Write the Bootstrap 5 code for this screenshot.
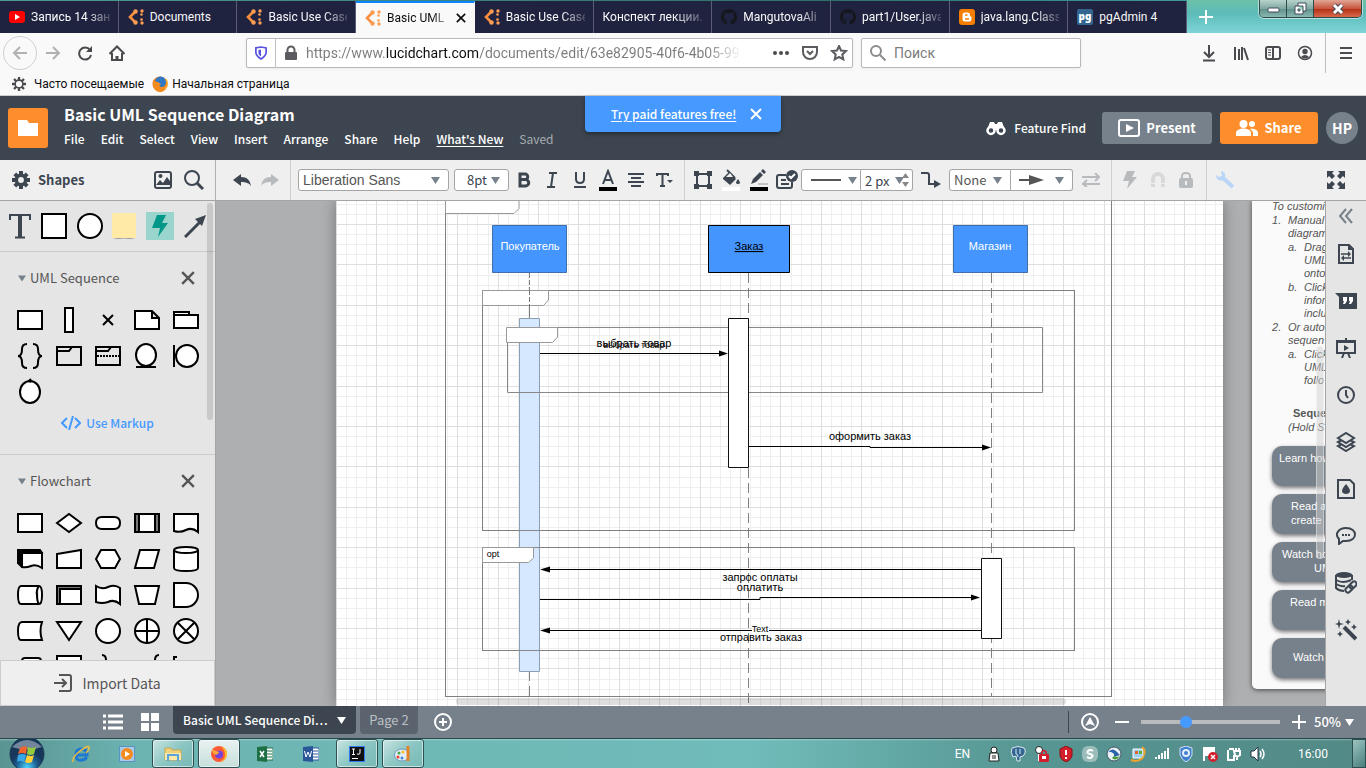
<!DOCTYPE html>
<html lang="en">
<head>
<meta charset="utf-8">
<meta name="viewport" content="width=device-width, initial-scale=1">
<title>Basic UML Sequence Diagram</title>
<link rel="stylesheet" href="https://cdn.jsdelivr.net/npm/bootstrap@5.3.0/dist/css/bootstrap.min.css">
<style>
  :root { --ink:#3d4650; --app:"Noto Sans CJK SC","Noto Sans",sans-serif; --sys:Roboto,"Noto Sans",sans-serif; }
  body { font-family:var(--app); font-size:13px; line-height:16px; color:var(--ink); background:#f9f9fa; }
  svg { display:block; flex-shrink:0; }
  button { background:none; border:0; padding:0; color:inherit; }
  .sys { font-family:var(--sys); font-size:12px; color:#0c0c0d; }
  .bar { flex-shrink:0; }

  /* browser tabs */
  .tabstrip { height:33px; padding-top:1px; background:linear-gradient(90deg,#4f9a94,#2f6f6c 60%,#3d9a98 87%,#8fd0b0 93%,#4db0ac); }
  .btab { flex:1 1 0; min-width:0; height:32px; padding:0 8px 0 9px; gap:6px; background:#202340; color:#f9f9fa; border-right:1px solid #5b5d75; text-decoration:none; }
  .btab.on { background:#f9f9fa; color:#0c0c0d; border-top:2px solid #0a84ff; border-right-color:#f9f9fa; }
  .btab span { flex:1; min-width:0; overflow:hidden; white-space:nowrap; -webkit-mask-image:linear-gradient(90deg,#000 70%,#0003); mask-image:linear-gradient(90deg,#000 70%,#0003); }
  .btab span.whole { -webkit-mask-image:none; mask-image:none; }
  .strip-end { width:179px; background:linear-gradient(#6cc0a8,#5cbcb8 40%,#7fd4d8); margin-top:-1px; height:33px; }
  .winbtns { height:18px; border:1px solid #30494b; border-top:0; border-radius:0 0 5px 5px; overflow:hidden; box-shadow:0 0 0 1px #ffffff80; }
  .winbtns button { width:27px; background:linear-gradient(#b8d4cc,#7fa8a0 50%,#5f8f88 51%,#88b8b0); border-right:1px solid #30494b; }
  .winbtns button.shut { width:47px; background:linear-gradient(#e0a595,#c8553d 50%,#b02f14 51%,#d8684a); border:0; }

  /* address row */
  .navrow { height:40px; }
  .navbtn { width:32px; height:32px; display:grid; place-items:center; }
  .navback { border:1px solid #cfcfd0; border-radius:50%; width:34px; height:34px; margin:0 0 0 3px; }
  .field { height:30px; background:#fff; border:1px solid #b9b9ba; border-radius:2px; box-shadow:0 1px 3px #0000000f; }
  .field input { border:0; outline:0; background:none; font:14px/20px var(--sys); min-width:0; padding:0; }
  .field input::placeholder { color:#7b7b7c; }
  .field input.addr { color:transparent; background:linear-gradient(90deg,#7b7b7c 0 79px,#0c0c0d 79px 173px,#7b7b7c 173px 400px,transparent 436px); -webkit-background-clip:text; background-clip:text; }
  .place { margin-left:113px; }
  .find { width:220px; margin-right:112px; }
  .bookmarks { height:23px; border-bottom:1px solid #cccdcf; }
  .bookmarks a { color:inherit; text-decoration:none; }

  /* editor header */
  .apphead { height:64px; background:var(--ink); color:#fff; }
  .apphead h1 { font-size:16px; line-height:20px; font-weight:700; margin:0; }
  .headings { padding-bottom:7px; }
  .apphead nav { padding-top:9px; }
  .apphead a { color:#fff; text-decoration:none; font-weight:500; font-size:12px; }
  .apphead nav span { color:#a5abb1; font-size:12px; }
  .apphead a.new { text-decoration:underline; text-underline-offset:2px; }
  .logo { width:40px; height:40px; background:#fd8e2b; border-radius:3px; display:grid; place-items:center; }
  .promo { top:0; height:36px; width:196px; background:#4599ff; border-radius:0 0 4px 4px; box-shadow:0 2px 4px #0006; gap:14px; padding-left:26px; }
  .apphead .promo a { text-decoration:underline; text-underline-offset:2px; }
  .hbtn { height:32px; border-radius:3px; font-weight:700; color:#fff; gap:6px; }
  .hbtn.present { width:110px; background:#77818b; }
  .hbtn.share { width:98px; background:#fd8e2b; }
  .avatar { width:32px; height:32px; border-radius:50%; background:#77818b; font-weight:700; font-size:14px; }

  /* toolbar */
  .tools { height:41px; background:#efefef; border-bottom:1px solid #a5a5a6; }
  .tools .lead-cell { width:216px; height:40px; border-right:1px solid #b0b0b0; padding:0 11px 0 12px; font-weight:700; }
  .vr2 { width:1px; height:40px; background:#cfcfcf; margin:0 4px 0 6px; }
  .tbtn { width:28px; height:28px; display:grid; place-items:center; }
  .first { margin-left:12px; }
  .off { opacity:.3; } .faint { opacity:.12; }
  .pick { height:22px; border:1px solid #a5a5a6; border-radius:3px; background:#fff no-repeat right 8px center url("data:image/svg+xml,%3Csvg xmlns='http://www.w3.org/2000/svg' width='9' height='7'%3E%3Cpath d='M0 0h9L4.500 7z' fill='%2377818b'/%3E%3C/svg%3E"); appearance:none; color:#555; font-family:var(--app); font-size:13px; line-height:18px; padding:0 0 0 4px; outline:0; }
  .pick.fam { width:151px; margin:0 5px 0 3px; font-family:"Liberation Sans",sans-serif; font-size:14px; }
  .pick.size { width:55px; padding-left:12px; margin-right:1px; color:var(--ink); }
  .pick.half { width:62px; } .pick.line { width:60px; background-position:right 3px center; } .pick.width { width:52px; color:var(--ink); }
  .pick.l { border-radius:3px 0 0 3px; } .pick.r { border-radius:0 3px 3px 0; border-left:0; }
  .over { pointer-events:none; }

  /* shape sidebar */
  .side { width:216px; background:#e5e5e5; border-right:1px solid #a5a5a6; color:#555; }
  .quick { height:51px; border-bottom:1px solid #ccc; padding:0 8px 0 9px; }
  .sec-head { height:50px; padding:2px 20px 0 18px; font-size:13px; }
  .shapes { display:grid; grid-template-columns:repeat(5,39px); grid-auto-rows:36px; padding-left:10px; }
  .shapes path,.shapes circle,.shapes ellipse { fill:#fff; stroke:#000; stroke-width:2; }
  .shapes .n { fill:none; } .shapes .k { fill:#000; } .shapes .g { fill:#777; }
  .markup { height:26px; color:#4599ff; font-weight:500; font-size:12px; text-decoration:none; gap:5px; }
  .split { height:1px; background:#ccc; margin:18px 0 0; }
  .import { height:46px; background:#efefef; border:1px solid #ccc; font-size:14px; color:#555; gap:10px; }
  .thumb { background:#00000020; border-radius:4px; }

  /* canvas */
  .canvas { background:#aeafb1; }
  .sheet { width:887px; background:#fff; margin-left:120px; margin-right:29px; box-shadow:0 0 14px #0005; }
  .sheet text { font:11px "Liberation Sans",sans-serif; text-anchor:middle; }
  .notes { width:260px; height:489px; background:#fafafa; border-radius:0 0 5px 5px; box-shadow:0 1px 5px #0009; font:italic 11px/13px "Liberation Sans",sans-serif; color:#555; padding:0 0 0 20px; margin-top:-1px; white-space:nowrap; }
  .notes ol { margin:0; padding-left:16px; list-style:none; counter-reset:step; }
  .notes li { margin-top:1px; counter-increment:step; }
  .notes li::before { content:counter(step) "."; display:inline-block; width:16px; margin-left:-16px; }
  .notes ol ol li::before { content:counter(step,lower-alpha) "."; }
  .notes b { font-style:normal; padding-left:21px; line-height:16px; margin-top:18px; display:block; }
  .ncard { height:40px; margin-bottom:8px; width:230px; border-radius:10px; background:#77818b; color:#fff; box-shadow:0 2px 4px #0008; font-style:normal; line-height:14px; display:block; padding-top:5px; text-decoration:none; }
  .hscroll { left:240px; right:259px; bottom:1px; height:7px; }
  .vscroll { right:1px; top:145px; width:8px; height:213px; background:#d0d0d080; border:1px solid #ffffff60; }
  .sidescroll { right:2px; top:2px; width:6px; height:217px; }

  /* right rail */
  .rail { width:41px; background:#e5e5e5; border-left:1px solid #a5a5a6; }
  .rail button { height:47px; width:40px; display:grid; place-items:center; }
  .rail button.fold { height:29px; }

  /* page bar */
  .pagebar { height:32px; background:#77818b; color:#fff; font-weight:500; }
  .views { margin-left:103px; margin-right:14px; gap:18px; }
  .ptab { height:28px; width:183px; border-radius:0 0 4px 4px; background:var(--ink); color:#fff; text-decoration:none; padding:0 10px; font-size:12px; white-space:nowrap; }
  .ptab.dim { width:58px; background:#5b646e; color:#bcc1c6; font-weight:400; margin-left:4px; padding:0; font-size:13px; }
  .rule { width:1px; height:22px; background:#3d4650; }
  .zoomer { appearance:none; width:139px; height:12px; margin:0 12px; background:linear-gradient(#b9babc,#b9babc) center/100% 4px no-repeat; }
  .zoomer::-webkit-slider-thumb { appearance:none; width:12px; height:12px; border-radius:50%; background:#4599ff; }

  /* taskbar */
  .taskbar { height:30px; border-top:1px solid #26484b; background:linear-gradient(#ffffff55,transparent 2px),linear-gradient(90deg,#5a9492,#6cb4b2 10%,#70bcba 55%,#579693 75%,#528986); }
  .task { width:42px; height:29px; margin-right:4px; display:grid; place-items:center; }
  .task.start { width:44px; margin:0 11px 0 5px; }
  .task.open { border:1px solid #2c5052; border-radius:3px; background:linear-gradient(135deg,#c8e4e1,#8cc6c3 50%,#76b9b6); box-shadow:inset 0 0 0 1px #ffffff90; }
  .task.front { background:linear-gradient(#e8f2f0,#c6dfdb); }
  .tray svg { margin-right:8px; }
  .peek { width:14px; height:29px; border:1px solid #2c5052; background:linear-gradient(135deg,#9cc4c0,#4a7f7c); }
</style>
</head>
<body class="vh-100 d-flex flex-column overflow-hidden">
<svg width="0" height="0" class="position-absolute">
  <symbol id="lucid" viewBox="0 0 16 16"><path d="M6.500 3.500 2 8l4.500 4.500" fill="none" stroke="#f98f3f" stroke-width="2.600"/><g fill="#ff9d52"><circle cx="7.500" cy="2.500" r="2.200"/><circle cx="7.500" cy="13.500" r="2.200"/><circle cx="14" cy="2" r="1.700"/><circle cx="14" cy="14" r="1.700"/><circle cx="13.500" cy="5.500" r="1.300"/><circle cx="13.500" cy="10.500" r="1.300"/></g></symbol>
  <symbol id="cat" viewBox="0 0 16 16"><path fill="#15171c" d="M8 0C3.580 0 0 3.580 0 8c0 3.540 2.290 6.530 5.470 7.590.4.070.55-.17.55-.38 0-.19-.01-.82-.01-1.490-2.010.37-2.530-.49-2.690-.94-.09-.23-.48-.94-.82-1.130-.28-.15-.68-.52-.01-.53.63-.01 1.080.58 1.230.82.72 1.210 1.870.87 2.330.66.07-.52.28-.87.51-1.070-1.780-.2-3.640-.89-3.640-3.950 0-.87.31-1.590.82-2.150-.08-.2-.36-1.020.08-2.120 0 0 .67-.21 2.200.82a7.600 7.600 0 0 1 4 0c1.530-1.040 2.200-.82 2.200-.82.44 1.100.16 1.920.08 2.120.51.56.82 1.270.82 2.150 0 3.070-1.870 3.750-3.650 3.950.29.25.54.73.54 1.480 0 1.070-.01 1.930-.01 2.200 0 .21.15.46.55.38A8 8 0 0 0 8 0"/></symbol>
  <symbol id="cross" viewBox="0 0 12 12"><path d="M1 1l10 10M11 1 1 11" stroke="currentColor" stroke-width="2" fill="none"/></symbol>
  <symbol id="gear" viewBox="0 0 18 18"><path fill="none" stroke="currentColor" stroke-width="4" d="M9 0v3M9 15v3M0 9h3M15 9h3M2.800 2.800l2 2M13.200 13.200l2 2M15.200 2.800l-2 2M4.800 13.200l-2 2"/><circle cx="9" cy="9" r="4.700" fill="none" stroke="currentColor" stroke-width="3.600"/></symbol>
  <symbol id="down" viewBox="0 0 9 7"><path d="M0 0h9L4.500 7z" fill="currentColor"/></symbol>
</svg>

<nav class="tabstrip bar sys d-flex" aria-label="Browser tabs">
  <a href="#" class="btab d-flex align-items-center"><svg width="16" height="16" viewBox="0 0 16 16"><rect y="2" width="16" height="12" rx="3" fill="#f00"/><path d="M6 5l5 3-5 3z" fill="#fff"/></svg><span>Запись 14 зан</span></a>
  <a href="#" class="btab d-flex align-items-center"><svg width="16" height="16"><use href="#lucid"/></svg><span class="whole">Documents</span></a>
  <a href="#" class="btab d-flex align-items-center"><svg width="16" height="16"><use href="#lucid"/></svg><span>Basic Use Case</span></a>
  <a href="#" class="btab on d-flex align-items-center"><svg width="16" height="16"><use href="#lucid"/></svg><span>Basic UML</span><svg width="10" height="10"><use href="#cross" width="10" height="10"/></svg></a>
  <a href="#" class="btab d-flex align-items-center"><svg width="16" height="16"><use href="#lucid"/></svg><span>Basic Use Case</span></a>
  <a href="#" class="btab d-flex align-items-center"><span>Конспект лекции.</span></a>
  <a href="#" class="btab d-flex align-items-center"><svg width="16" height="16"><use href="#cat"/></svg><span>MangutovaAli</span></a>
  <a href="#" class="btab d-flex align-items-center"><svg width="16" height="16"><use href="#cat"/></svg><span>part1/User.java</span></a>
  <a href="#" class="btab d-flex align-items-center"><svg width="16" height="16" viewBox="0 0 16 16"><rect width="16" height="16" rx="3" fill="#f57d00"/><path d="M6 3.500h2.500A2.500 2.500 0 0 1 11 6v1l1.500.8V10A2.500 2.500 0 0 1 10 12.500H6A2.500 2.500 0 0 1 3.500 10V6A2.500 2.500 0 0 1 6 3.500z" fill="#fff"/><path d="M6 6h2.500M6 10h4" stroke="#f57d00" stroke-width="1.500"/></svg><span>java.lang.Class</span></a>
  <a href="#" class="btab d-flex align-items-center"><svg width="16" height="16" viewBox="0 0 16 16"><rect width="16" height="16" rx="2" fill="#326690"/><text x="8" y="11" text-anchor="middle" fill="#fff" font-family="Noto Sans" font-weight="900" font-size="10">pg</text></svg><span class="whole">pgAdmin 4</span></a>
  <div class="strip-end d-flex justify-content-between">
    <button class="ms-2 ps-1" aria-label="New tab"><svg width="14" height="14"><path d="M7 0v14M0 7h14" stroke="#fff" stroke-width="2"/></svg></button>
    <div class="winbtns d-flex me-1">
      <button aria-label="Minimize"><svg class="mx-auto" width="14" height="12"><rect x="2" y="5" width="11" height="4" rx="1" fill="#fff" stroke="#444b5c"/></svg></button>
      <button aria-label="Restore"><svg class="mx-auto" width="14" height="14"><path d="M5 1h8v8h-3v3H2V4h3z" fill="#fff" stroke="#444b5c"/><path d="M5 4h5v5M5 7h2v2H5z" fill="#8db" stroke="#444b5c"/></svg></button>
      <button class="shut" aria-label="Close"><svg class="mx-auto" width="14" height="14"><path d="M3 3l8 8M11 3l-8 8" stroke="#444b5c" stroke-width="5"/><path d="M3 3l8 8M11 3l-8 8" stroke="#fff" stroke-width="3"/></svg></button>
    </div>
  </div>
</nav>

<div class="navrow bar sys d-flex align-items-center">
  <button class="navbtn navback" aria-label="Back"><svg width="16" height="16" fill="none" stroke="#b1b1b3" stroke-width="2"><path d="M15 8H2M8 2 2 8l6 6"/></svg></button>
  <button class="navbtn" aria-label="Forward"><svg width="16" height="16" fill="none" stroke="#b1b1b3" stroke-width="2"><path d="M1 8h13M8 2l6 6-6 6"/></svg></button>
  <button class="navbtn" aria-label="Reload"><svg width="16" height="16" fill="none" stroke="#4a4a4f" stroke-width="2"><path d="M13 5a6 6 0 1 0 1 5"/><path d="M15 1v6H9z" fill="#4a4a4f" stroke="none"/></svg></button>
  <button class="navbtn" aria-label="Home"><svg width="16" height="16" fill="none" stroke="#4a4a4f" stroke-width="2"><path d="M.5 9 8 1.500 15.500 9M3 8v7h10V8"/><path d="M8 15v-4" stroke-width="3"/></svg></button>
  <div class="field place d-flex align-items-center flex-grow-1 ps-2 pe-1">
    <svg width="12" height="16" viewBox="0 0 14 16" fill="none"><path d="M1 2 7 1l6 1v5c0 4-3 6-6 8-3-2-6-4-6-8z" stroke="#5a55e0" stroke-width="2"/><path d="M7 4v8c-2-1-3-3-3-5V4.500z" fill="#5a55e0"/></svg>
    <div class="vr mx-2"></div>
    <svg class="me-2" width="14" height="16"><rect x="1" y="7" width="12" height="8" rx="1" fill="#5c5c60"/><path d="M3.500 8V5a3.500 3.500 0 0 1 7 0v3" fill="none" stroke="#5c5c60" stroke-width="2"/></svg>
    <input class="addr flex-grow-1" aria-label="Address" value="https://www.lucidchart.com/documents/edit/63e82905-40f6-4b05-99">
    <button aria-label="Page actions"><svg width="18" height="16" fill="#4a4a4f"><circle cx="3" cy="8" r="2"/><circle cx="9" cy="8" r="2"/><circle cx="15" cy="8" r="2"/></svg></button>
    <button class="mx-2 px-1" aria-label="Save to Pocket"><svg width="16" height="16" fill="none" stroke="#5c5c60" stroke-width="2"><path d="M1 2h14v5a7 7 0 0 1-14 0z"/><path d="M5 6l3 3 3-3"/></svg></button>
    <button aria-label="Bookmark this page"><svg width="18" height="16" fill="none" stroke="#5c5c60" stroke-width="2"><path d="M9 1l2 4.500 5 .5-3.700 3.400 1 5L9 12l-4.300 2.400 1-5L2 6l5-.5z"/></svg></button>
  </div>
  <div class="field find d-flex align-items-center ms-2 px-2">
    <svg width="16" height="16" fill="none" stroke="#8c8c8e" stroke-width="2"><circle cx="6" cy="6" r="5"/><path d="M10 10l5.500 5.500"/></svg>
    <input class="ms-1 ps-1 w-75" aria-label="Search" placeholder="Поиск">
  </div>
  <button class="navbtn" aria-label="Downloads"><svg width="14" height="18" fill="none" stroke="#4a4a4f" stroke-width="2"><path d="M7 1v12M2 8l5 5 5-5M1 16.500h12"/></svg></button>
  <button class="navbtn" aria-label="Library"><svg width="16" height="16" fill="none" stroke="#4a4a4f" stroke-width="2"><path d="M2 2v13M6 4v11M9 2v13M11 3l4 12"/></svg></button>
  <button class="navbtn" aria-label="Sidebars"><svg width="16" height="14" fill="none" stroke="#4a4a4f" stroke-width="2"><rect x="1" y="1" width="14" height="12" rx="2"/><path d="M8 1v12"/><path d="M3 4h3M3 6.500h3M3 9h3" stroke-width="1"/></svg></button>
  <button class="navbtn" aria-label="Account"><svg width="16" height="16"><circle cx="8" cy="8" r="6.500" fill="none" stroke="#4a4a4f" stroke-width="1.500"/><circle cx="8" cy="6.500" r="2.700" fill="#4a4a4f"/><path d="M4 12q4-4 8 0-4 3-8 0z" fill="#4a4a4f"/></svg></button>
  <div class="vr ms-1"></div>
  <button class="navbtn mx-1" aria-label="Menu"><svg width="12" height="12" stroke="#4a4a4f" stroke-width="2"><path d="M0 1h12M0 6h12M0 11h12"/></svg></button>
</div>

<div class="bookmarks bar sys d-flex align-items-center ps-2">
  <svg class="mx-1" width="14" height="14" viewBox="0 0 18 18"><circle cx="9" cy="9" r="5" fill="none" stroke="#4a4a4f" stroke-width="2"/><path fill="none" stroke="#4a4a4f" stroke-width="3" d="M9 0v4M9 14v4M0 9h4M14 9h4M2.600 2.600l3 3M12.400 12.400l3 3M15.400 2.600l-3 3M5.600 12.400l-3 3"/></svg>
  <a href="#" class="ms-1">Часто посещаемые</a>
  <svg class="ms-2 me-1" width="16" height="16"><circle cx="8" cy="8" r="7.500" fill="#f07a14"/><circle cx="8.500" cy="6" r="5.500" fill="#2f78c4"/><path d="M1 4c2 1 3 2 5 2l3 2c-2 1-2 3 1 3 2 0 3-1 5-1-1 4-4 6-7 6C2 16 0 9 1 4" fill="#f58a1f"/><path d="M14 3q3 6-1 10" fill="none" stroke="#fbb034" stroke-width="1.500"/></svg>
  <a href="#">Начальная страница</a>
</div>

<header class="apphead bar position-relative d-flex align-items-center px-2">
  <a href="#" class="logo" aria-label="Documents"><svg width="20" height="16" fill="#fff"><path d="M0 0h9l2 3h9v13H0z"/></svg></a>
  <div class="headings ms-3 flex-grow-1">
    <h1>Basic UML Sequence Diagram</h1>
    <nav class="d-flex gap-3 lh-1" aria-label="Document menu">
      <a href="#">File</a><a href="#">Edit</a><a href="#">Select</a><a href="#">View</a><a href="#">Insert</a><a href="#">Arrange</a><a href="#">Share</a><a href="#">Help</a><a href="#" class="new">What's New</a><span>Saved</span>
    </nav>
  </div>
  <div class="promo position-absolute start-50 translate-middle-x d-flex align-items-center">
    <a href="#">Try paid features free!</a>
    <button aria-label="Dismiss"><svg width="12" height="12"><use href="#cross"/></svg></button>
  </div>
  <a href="#" class="d-flex align-items-center me-3"><svg class="me-2" width="20" height="16"><path d="M4 2h4l1 2h2l1-2h4l3 8H1z" fill="#fff"/><g fill="#3d4650" stroke="#fff" stroke-width="2.500"><circle cx="5" cy="10.500" r="3.500"/><circle cx="15" cy="10.500" r="3.500"/></g></svg>Feature Find</a>
  <button class="hbtn present me-2 d-flex align-items-center justify-content-center"><svg width="22" height="18"><rect x="1" y="1" width="20" height="16" rx="2" fill="none" stroke="#fff" stroke-width="2"/><path d="M8 5l8 4-8 4z" fill="#fff"/></svg>Present</button>
  <button class="hbtn share me-2 d-flex align-items-center justify-content-center"><svg width="22" height="16" fill="#fff"><circle cx="7.500" cy="4" r="4"/><circle cx="16" cy="4" r="3"/><path d="M0 16v-3c0-6 15-6 15 0v3zM14 9c4-1 8 1 8 4v3h-5v-3q0-2-3-4"/></svg>Share</button>
  <button class="avatar">HP</button>
</header>

<div class="tools bar d-flex align-items-center">
  <div class="lead-cell d-flex align-items-center"><svg class="me-2" width="18" height="18"><use href="#gear"/></svg>Shapes
    <button class="ms-auto" aria-label="Insert image"><svg width="18" height="18"><rect x="1" y="1" width="16" height="16" rx="2" fill="none" stroke="#3d4650" stroke-width="2"/><path d="M2 14l4-5 3 3 4-6 3 4v4z" fill="#3d4650"/><circle cx="6.500" cy="5" r="2" fill="#3d4650"/></svg></button>
    <button class="ms-2 ps-1" aria-label="Search shapes"><svg width="20" height="20" fill="none" stroke="#3d4650"><circle cx="8" cy="8" r="7" stroke-width="2"/><path d="M13 13l6 6" stroke-width="3"/></svg></button>
  </div>
  <button class="tbtn first" aria-label="Undo"><svg width="18" height="13" fill="#3d4650"><path d="M0 6 8 0v3c6 0 9 3 10 9-2-3-5-4-10-4v4z"/></svg></button>
  <button class="tbtn off" aria-label="Redo"><svg width="18" height="13" fill="#3d4650"><path d="M18 6 10 0v3C4 3 1 6 0 12c2-3 5-4 10-4v4z"/></svg></button>
  <div class="vr2"></div>
  <select class="pick fam" aria-label="Font"><option>Liberation Sans</option></select>
  <select class="pick size" aria-label="Font size"><option>8pt</option></select>
  <button class="tbtn" aria-label="Bold"><svg width="14" height="18"><path d="M3 3h5a2.500 2.500 0 0 1 0 5.500H3zM3 8.500h5.500a3 3 0 0 1 0 6.500H3z" fill="none" stroke="#3d4650" stroke-width="3"/></svg></button>
  <button class="tbtn" aria-label="Italic"><svg width="12" height="16" stroke="#3d4650" stroke-width="2"><path d="M3 1h8M1 15h8M7 1 5 15"/></svg></button>
  <button class="tbtn" aria-label="Underline"><svg width="12" height="18" fill="none" stroke="#3d4650" stroke-width="2"><path d="M2 1v7q0 4 4 4t4-4V1M0 16h12"/></svg></button>
  <button class="tbtn" aria-label="Text colour"><svg width="18" height="22"><path d="M4 15 9 2l5 13M6 11h6" fill="none" stroke="#3d4650" stroke-width="2"/><path d="M0 18h18v4H0z"/></svg></button>
  <button class="tbtn" aria-label="Alignment"><svg width="16" height="14" stroke="#3d4650" stroke-width="2"><path d="M0 1h16M3 5h10M0 9h16M3 13h10"/></svg></button>
  <button class="tbtn" aria-label="Text options"><svg width="17" height="14"><path d="M1 3V1h11v2M6.500 1v12M4 13h5" fill="none" stroke="#3d4650" stroke-width="2"/><path d="M11 7h6l-3 3z" fill="#3d4650"/></svg></button>
  <div class="vr2"></div>
  <button class="tbtn" aria-label="Shape options"><svg width="18" height="18"><path d="M3 3h12v12H3z" fill="none" stroke="#3d4650" stroke-width="2"/><path d="M0 0h5v5H0zM13 0h5v5h-5zM0 13h5v5H0zM13 13h5v5h-5z" fill="#3d4650"/></svg></button>
  <button class="tbtn" aria-label="Fill colour"><svg width="18" height="22"><path d="M1 9 7 3l7 7-6 6-7-6z" fill="#3d4650"/><path d="M5 1l8 8" stroke="#3d4650" stroke-width="2"/><path d="M8 4l3 4H4z" fill="#efefef"/><path d="M16 10q4 5 0 5t0-5" fill="#3d4650"/><path d="M0 18h18v4H0z" fill="#fff"/></svg></button>
  <button class="tbtn" aria-label="Line colour"><svg width="18" height="22"><path d="M1 15l2-5 7-7 3 3-7 7zM11 2l2-2 3 3-2 2z" fill="#3d4650"/><path d="M8 15h10" stroke="#999"/><path d="M0 18h18v4H0z"/></svg></button>
  <button class="tbtn" aria-label="Conditional formatting"><svg width="22" height="20"><path d="M10 5H3q-2 0-2 2v9q0 2 2 2h11q2 0 2-2v-4M5 10h5M5 14h8" fill="none" stroke="#3d4650" stroke-width="2"/><circle cx="16" cy="6" r="6" fill="#3d4650"/><path d="M13 6l2 2 4-4" fill="none" stroke="#fff" stroke-width="2"/></svg></button>
  <div class="position-relative">
    <select class="pick l line" aria-label="Line style"><option></option></select>
    <svg class="over position-absolute top-50 start-0 translate-middle-y ms-2" width="34" height="2"><path d="M2 1h30" stroke="#555" stroke-width="2"/></svg>
  </div>
  <div class="position-relative">
    <input class="pick r width bg-white" aria-label="Line width" value="2 px">
    <svg class="over position-absolute top-50 end-0 translate-middle-y me-1" width="7" height="14" fill="#888"><path d="M0 5h7L3.500 0zM0 9h7l-3.500 5z"/></svg>
  </div>
  <button class="tbtn ms-1" aria-label="Connector shape"><svg width="20" height="16"><path d="M0 1h6q2 0 2 2v9h6" fill="none" stroke="#3d4650" stroke-width="2"/><path d="M13 8l7 4-7 4z" fill="#3d4650"/></svg></button>
  <select class="pick l half ms-1" aria-label="Line start"><option>None</option></select>
  <div class="position-relative me-1">
    <select class="pick r half" aria-label="Line end"><option></option></select>
    <svg class="over position-absolute top-50 start-0 translate-middle-y ms-2" width="26" height="10"><path d="M0 5h12" stroke="#555" stroke-width="2"/><path d="M10 0l15 5-15 5z" fill="#555"/></svg>
  </div>
  <button class="tbtn off" aria-label="Swap ends"><svg width="18" height="14" fill="none" stroke="#3d4650" stroke-width="2"><path d="M0 4h17M13 0l4 4-4 4M18 11H1M5 7l-4 4 4 3"/></svg></button>
  <div class="vr2"></div>
  <button class="tbtn off" aria-label="Actions"><svg width="14" height="18" fill="#3d4650"><path d="M4 0h8L9 6h5L4 18l2-8H0z"/></svg></button>
  <button class="tbtn faint" aria-label="Magnetize"><svg width="14" height="16" fill="none" stroke="#3d4650" stroke-width="4"><path d="M2 11V7a5 5 0 0 1 10 0v4M2 12v3M12 12v3"/></svg></button>
  <button class="tbtn off" aria-label="Lock"><svg width="14" height="16"><rect y="6" width="14" height="10" rx="2" fill="#3d4650"/><path d="M3 7V4q0-3 4-3t4 3v3" fill="none" stroke="#3d4650" stroke-width="2"/><path d="M7 9v4" stroke="#fff" stroke-width="2"/></svg></button>
  <div class="vr2"></div>
  <button class="tbtn" aria-label="Manage"><svg width="18" height="18"><path d="M7 7l10 9" stroke="#b9d5f7" stroke-width="4"/><path d="M5 0q5 1 4 6t-6 3Q0 8 0 4l3 2 3-1z" fill="#b9d5f7"/></svg></button>
  <button class="tbtn ms-auto me-3" aria-label="Full screen"><svg width="18" height="18" fill="#3d4650"><path d="M0 0h7L5 2l3 3-3 3-3-3-2 2zM18 0v7l-2-2-3 3-3-3 3-3-2-2zM0 18v-7l2 2 3-3 3 3-3 3 2 2zM18 18h-7l2-2-3-3 3-3 3 3 2-2z"/></svg></button>
</div>

<main class="flex-grow-1 d-flex overflow-hidden">
  <aside class="side flex-shrink-0 d-flex flex-column position-relative">
    <div class="quick flex-shrink-0 d-flex align-items-center justify-content-between">
      <button aria-label="Text"><svg width="22" height="26"><path d="M1 7V2h20v5M11 2v22M6 24.500h10" fill="none" stroke="#3d4650" stroke-width="2"/><path d="M11 2v22" stroke="#3d4650" stroke-width="4"/></svg></button>
      <button aria-label="Block"><svg width="26" height="26"><path d="M1 1h24v24H1z" fill="#fff" stroke="#000" stroke-width="2"/></svg></button>
      <button aria-label="Circle"><svg width="26" height="26"><circle cx="13" cy="13" r="12" fill="#fff" stroke="#000" stroke-width="2"/></svg></button>
      <button aria-label="Note"><svg width="24" height="26"><path d="M2 25q10 2 20 0" stroke="#999" fill="none"/><path d="M0 0h24v25H0z" fill="#ffeaa7"/></svg></button>
      <button aria-label="Hotspot"><svg width="28" height="28"><path d="M0 0h28v28H0z" fill="#9ad5cd"/><path d="M11 3h9l-4 8h6L12 25l2-9H6z" fill="#009688"/></svg></button>
      <button aria-label="Line"><svg width="23" height="24"><path d="M1 23 17 7" stroke="#3d4650" stroke-width="3"/><path d="M22 1l-4 11-7-7z" fill="#3d4650"/></svg></button>
    </div>
    <div class="flex-grow-1 overflow-hidden">
      <div class="sec-head d-flex align-items-center"><svg class="me-1" width="8" height="7" color="#77818b"><use href="#down"/></svg>UML Sequence<button class="ms-auto" aria-label="Close UML Sequence"><svg width="14" height="14"><use href="#cross"/></svg></button></div>
      <div class="shapes" data-set="uml"></div>
      <a href="#" class="markup d-flex align-items-center justify-content-center"><svg width="20" height="14" fill="none" stroke="#4599ff" stroke-width="2"><path d="M6 2 1 7l5 5M14 2l5 5-5 5M12 0 8 14"/></svg>Use Markup</a>
      <div class="split"></div>
      <div class="sec-head d-flex align-items-center"><svg class="me-1" width="8" height="7" color="#77818b"><use href="#down"/></svg>Flowchart<button class="ms-auto" aria-label="Close Flowchart"><svg width="14" height="14"><use href="#cross"/></svg></button></div>
      <div class="shapes" data-set="flow"></div>
    </div>
    <button class="import flex-shrink-0 w-100 d-flex align-items-center justify-content-center"><svg width="18" height="18" fill="none" stroke="#555" stroke-width="2"><path d="M5 1h10q2 0 2 2v12q0 2-2 2H5M0 9h12M8 5l4 4-4 4"/></svg>Import Data</button>
    <div class="thumb sidescroll position-absolute"></div>
  </aside>

  <section class="canvas flex-grow-1 overflow-hidden position-relative d-flex" aria-label="Canvas">
    <div class="sheet flex-shrink-0">
      <svg width="887" height="505" viewBox="336 201 887 505">
        <path id="minor" stroke="#efefef" fill="none"/><path id="major" stroke="#dedede" fill="none"/>
        <g fill="none" stroke="#808080" shape-rendering="crispEdges">
          <path d="M445.500 190V696.500H1111.500V190"/><path d="M482.500 290.500H1074.500V530.500H482.500zM482.500 547.500H1074.500V650.500H482.500z"/>
          <path d="M529.500 273v45" stroke-dasharray="5 2"/><path d="M529.500 671v26" stroke-dasharray="10 5"/>
          <path d="M748.500 273V706M991.500 273V697" stroke-dasharray="10 5"/>
        </g>
        <g fill="#fff" stroke="#999"><path d="M445.500 190V213.500H514l5-5V190M482.500 290.500H548.500V300l-5 5.500H482.500z"/></g>
        <path d="M529.500 290v28" stroke="#777" stroke-dasharray="5 2"/>
        <path d="M519.500 318.500h20v353h-20z" fill="#d6e8ff" stroke="#8ba0b5"/>
        <path d="M507.500 327.500h535v65h-535zM519 530.500h21M519 547.500h21M519 650.500h21" fill="none" stroke="#888"/>
        <g fill="#fff" stroke="#999"><path d="M506.500 327.500H557.500V337l-5 5.500H506.500zM482.500 547.500H533.500V558l-5 4.500H482.500z"/></g>
        <g fill="#fff" stroke="#111"><path d="M728.500 318.500h20v149h-20zM981.500 558.500h20v80h-20z"/></g>
        <g fill="#4595ff" stroke="#3f6ea8"><path d="M492.500 225.500h74v47h-74zM953.500 225.500h74v47h-74z"/><path d="M708.500 225.500h81v47h-81z" stroke="#000"/></g>
        <g fill="none" stroke="#000"><path d="M540 353.500H722M749 446.500H870v1H985M981 569.500H546M540 599.500H760v-2H975M981 630.500H546"/></g>
        <path d="M728 353.500l-9-3v6zM991 447.500l-9-3v6zM540 569.500l10-3v6zM980 597.500l-9-3v6zM540 630.500l10-3v6z"/>
        <text x="530" y="250" style="fill:#fff">Покупатель</text>
        <text x="749" y="250" text-decoration="underline">Заказ</text>
        <text x="990" y="250" style="fill:#fff">Магазин</text>
        <text x="634" y="348" style="font-size:9px">выбрать товар</text>
        <text x="634" y="347">выбрать товар</text>
        <text x="870" y="440">оформить заказ</text>
        <text x="493" y="557" style="font-size:9px">opt</text>
        <text x="760" y="581">запрос оплаты</text>
        <text x="760" y="591">оплатить</text>
        <path d="M752 625h17v10h-17z" fill="#fff"/>
        <text x="760" y="632" style="font-size:9px">Text</text>
        <text x="761" y="641">отправить заказ</text>
      </svg>
    </div>
    <div class="notes flex-shrink-0">
      To customi
      <ol><li>Manual<br>diagram<ol><li>Drag<br>UML<br>onto</li><li>Click<br>infor<br>inclu</li></ol></li><li>Or auto<br>sequen<ol><li>Click<br>UML<br>follo</li></ol></li></ol>
      <b>Seque</b><div class="ps-3 mb-2 pb-1">(Hold S</div>
      <a href="#" class="ncard" style="padding-left:7px">Learn how</a>
      <a href="#" class="ncard" style="padding-left:19px">Read a<br>create</a>
      <a href="#" class="ncard" style="padding-left:10px">Watch ho<br><span class="ms-4 ps-2">UM</span></a>
      <a href="#" class="ncard" style="padding-left:18px">Read m</a>
      <a href="#" class="ncard pt-2" style="padding-left:21px"><span class="d-block pt-1">Watch</span></a>
    </div>
    <div class="thumb hscroll position-absolute"></div>
    <div class="vscroll position-absolute rounded"></div>
  </section>

  <aside class="rail flex-shrink-0" aria-label="Panels">
    <button class="fold" aria-label="Collapse"><svg width="16" height="16" fill="none" stroke="#77818b" stroke-width="2"><path d="M8 1 2 8l6 7M14 1 8 8l6 7"/></svg></button>
    <button aria-label="Page settings"><svg width="16" height="20" fill="none" stroke="#3d4650" stroke-width="2"><path d="M1 1h10l4 4v14H1z"/><path d="M3 10h9M13 14H4" stroke-width="1.500"/><path d="M10 7l3 3-3 3zM6 11l-3 3 3 3zM10 1v5h5z" fill="#3d4650" stroke="none"/></svg></button>
    <button aria-label="Comments"><svg width="22" height="16"><path d="M0 0h22v16H4V4z" fill="#3d4650"/><path d="M8 4h4v4l-2 3H8l1-3H8zM14 4h4v4l-2 3h-2l1-3h-1z" fill="#fff"/></svg></button>
    <button aria-label="Presentation"><svg width="20" height="20"><path d="M1 4h18v11H1z" fill="none" stroke="#3d4650" stroke-width="2"/><path d="M0 2h20v3H0zM9 0h2v3H9zM8 7l5 3-5 3z" fill="#3d4650"/><path d="M8 15l-2 5M12 15l2 5" stroke="#3d4650" stroke-width="2"/></svg></button>
    <button aria-label="History"><svg width="18" height="18" fill="none" stroke="#3d4650" stroke-width="2"><circle cx="9" cy="9" r="8"/><path d="M9 4v5l2 3"/></svg></button>
    <button aria-label="Layers"><svg width="20" height="20" fill="#e5e5e5" stroke="#3d4650" stroke-width="2"><path d="M2 14l8-4 8 4-8 5z"/><path d="M2 10l8-4 8 4-8 5z"/><path d="M2 6l8-5 8 5-8 5z"/></svg></button>
    <button aria-label="Themes"><svg width="18" height="20"><path d="M1 1h12l4 4v14H1z" fill="none" stroke="#3d4650" stroke-width="2"/><path d="M9 5q8 9 0 10-8-1 0-10" fill="#3d4650"/></svg></button>
    <button aria-label="Chat"><svg width="20" height="18"><path d="M10 1c12 0 12 13 0 13H7l-4 3v-5C-2 7 3 1 10 1z" fill="none" stroke="#3d4650" stroke-width="2"/><path d="M6 7h2v2H6zM9 7h2v2H9zM12 7h2v2h-2z" fill="#3d4650"/></svg></button>
    <button aria-label="Data"><svg width="22" height="22"><path d="M1 3v13q3 3 8 3M1 8q7 4 15 0M1 12q5 3 9 2M17 3v5" fill="none" stroke="#3d4650" stroke-width="2"/><ellipse cx="9" cy="3" rx="8.500" ry="3" fill="#3d4650"/><rect x="-4" y="-2.500" width="8" height="5" rx="2.500" transform="translate(18 13) rotate(-45)" fill="none" stroke="#3d4650" stroke-width="2"/><rect x="-4" y="-2.500" width="8" height="5" rx="2.500" transform="translate(14 17) rotate(-45)" fill="none" stroke="#3d4650" stroke-width="2"/></svg></button>
    <button aria-label="Magic"><svg width="22" height="22" fill="#3d4650"><path d="M9 8l12 12" stroke="#3d4650" stroke-width="4"/><path d="M4 0l1 4 4 1-4 1-1 4-1-4-3-1 3-1zM13 0l1 2 2 1-2 1-1 2-1-2-2-1 2-1zM19 5l1 2 2 1-2 1-1 2-1-2-2-1 2-1zM5 12l1 2 2 1-2 1-1 2-1-2-2-1 2-1z"/></svg></button>
  </aside>
</main>

<footer class="pagebar bar d-flex align-items-start">
  <div class="views d-flex align-self-center">
    <button aria-label="Page list"><svg width="20" height="16" stroke="#fff" stroke-width="3"><path d="M0 2h3M5 2h15M0 8h3M5 8h15M0 14h3M5 14h15"/></svg></button>
    <button aria-label="Page grid"><svg width="18" height="18" fill="#fff"><path d="M0 0h8v8H0zM10 0h8v8h-8zM0 10h8v8H0zM10 10h8v8h-8z"/></svg></button>
  </div>
  <a href="#" class="ptab d-flex align-items-center justify-content-between">Basic UML Sequence Di…<svg width="9" height="7"><use href="#down"/></svg></a>
  <a href="#" class="ptab dim d-flex align-items-center justify-content-center">Page 2</a>
  <button class="align-self-center ms-3 me-auto" aria-label="Add page"><svg width="18" height="18" fill="none" stroke="#fff" stroke-width="2"><circle cx="9" cy="9" r="8"/><path d="M9 5v8M5 9h8"/></svg></button>
  <div class="d-flex align-items-center align-self-center pe-2">
    <div class="rule me-2"></div>
    <button class="ms-1" aria-label="Centre page"><svg width="18" height="18"><circle cx="9" cy="9" r="8" fill="none" stroke="#fff" stroke-width="2"/><path d="M9 4l5 9-5-2-5 2z" fill="#fff"/></svg></button>
    <button class="ms-3" aria-label="Zoom out"><svg width="14" height="2"><path d="M0 1h14" stroke="#fff" stroke-width="2"/></svg></button>
    <input class="zoomer px-0" type="range" min="0" max="100" value="31" aria-label="Zoom">
    <button aria-label="Zoom in"><svg width="14" height="14"><path d="M0 7h14M7 0v14" stroke="#fff" stroke-width="2"/></svg></button>
    <button class="ms-2 me-1 d-flex align-items-center fw-medium">50%<svg class="ms-1" width="9" height="7"><use href="#down"/></svg></button>
  </div>
</footer>

<div class="taskbar bar sys d-flex align-items-center text-white">
  <button class="task start" aria-label="Start"><svg width="36" height="30" viewBox="0 0 36 30"><defs><radialGradient id="orb" cy=".9"><stop stop-color="#4fd8ff"/><stop offset=".6" stop-color="#1c5f92"/><stop offset="1" stop-color="#16365a"/></radialGradient></defs><circle cx="18" cy="15" r="17" fill="url(#orb)" stroke="#1c3c56"/><path d="M3 8Q18-6 33 8q-15 5-30 0" fill="#fff6"/><path d="M11 9q4-3 7-1l-1 7q-4-2-8 0z" fill="#f0642c"/><path d="M19 8q4 2 8 0l-2 7q-4 2-7 0z" fill="#93cc3c"/><path d="M9 16q4-2 8 0l-2 7q-4-2-7 0z" fill="#38a8e8"/><path d="M18 16q4 2 7 0l-2 7q-4 2-7 0z" fill="#ffcf3a"/></svg></button>
  <button class="task" aria-label="Internet Explorer"><svg width="18" height="18" fill="none"><path d="M4 10h11q0-6-5.500-6T4 10t5.500 5q4 0 5-3" stroke="#1c78d0" stroke-width="3"/><path d="M1 17Q0 12 8 6t9-4q1 2-3 6" stroke="#f2bc3c" stroke-width="1.500"/></svg></button>
  <button class="task" aria-label="Media Player"><svg width="16" height="16"><rect x=".5" y=".5" width="15" height="15" fill="#a9cbe9" stroke="#5d93c4"/><circle cx="8" cy="8" r="6" fill="#f58a1f"/><path d="M6 5l5 3-5 3z" fill="#fff"/></svg></button>
  <button class="task open" aria-label="Explorer"><svg width="18" height="16"><path d="M1 2h6l1 2h9v10H1z" fill="#f0d27a" stroke="#c9a64a"/><path d="M1 7h16v7H1z" fill="#fae9a8"/><path d="M4 15V9h10v6" fill="none" stroke="#5aa3dc" stroke-width="2"/></svg></button>
  <button class="task open front" aria-label="Firefox"><svg width="18" height="18"><circle cx="9" cy="9" r="8" fill="#ff5a36"/><path d="M11 1q7 3 6 9t-8 7q6-2 6-7T11 1" fill="#ffbd2e"/><circle cx="9" cy="9.500" r="4" fill="#7542d8"/><path d="M2 4l4 2q3 0 3 2l-3 2q-4-1-4-6" fill="#ffa43a"/></svg></button>
  <button class="task" aria-label="Excel"><svg width="16" height="16"><path d="M8 2h8v12H8z" fill="#fff" stroke="#1e7145"/><path d="M10 5h5M10 8h5M10 11h5" stroke="#1e7145"/><path d="M0 1l10-1v16L0 15z" fill="#1e7145"/><path d="M3 5l4 6M7 5l-4 6" stroke="#fff" stroke-width="1.500"/></svg></button>
  <button class="task" aria-label="Word"><svg width="16" height="16"><path d="M8 2h8v12H8z" fill="#fff" stroke="#2b579a"/><path d="M10 5h5M10 8h5M10 11h5" stroke="#2b579a"/><path d="M0 1l10-1v16L0 15z" fill="#2b579a"/><path d="M1.500 5l1.500 6 2-5 2 5 1.500-6" stroke="#fff" fill="none"/></svg></button>
  <button class="task open" aria-label="IntelliJ"><svg width="16" height="16"><rect x=".5" y=".5" width="15" height="15" fill="#111" stroke="#2f7bf5"/><path d="M3 3h3M4.500 3v5M3 8.500h3M11 3v4q0 2-3 1M3 12.500h6" stroke="#fff" fill="none"/></svg></button>
  <button class="task open" aria-label="Paint"><svg width="18" height="16"><ellipse cx="8" cy="9" rx="7.500" ry="6" fill="#e3edf5" stroke="#6f9dbd"/><circle cx="5" cy="7" r="1.500" fill="#4a4"/><circle cx="9" cy="6" r="1.500" fill="#fb2"/><circle cx="4" cy="11" r="1.500" fill="#e43"/><circle cx="8" cy="12" r="1.500" fill="#48d"/><path d="M14 0v15" stroke="#e58428" stroke-width="3"/></svg></button>
  <span class="ms-auto me-3">EN</span>
  <div class="tray d-flex align-items-center">
    <svg width="16" height="16" fill="#fff" stroke="#222"><circle cx="8" cy="4" r="3"/><path d="M4 7h8l1 8H3zM6 10h4M6 12h4"/></svg>
    <svg width="16" height="16"><path d="M2 2q6-3 12 0 3 4-1 8l-3 1v4H7l-1-5-3 1Q0 6 2 2" fill="#336791" stroke="#dbe7f0"/><path d="M6 3v5q2 0 2 3M10 3v5" stroke="#dbe7f0" fill="none"/></svg>
    <svg width="16" height="16"><circle cx="5" cy="4" r="3.500" fill="#fff" stroke="#222"/><path d="M5 8v7" stroke="#fff" stroke-width="2"/><rect x="5" y="8" width="10" height="8" rx="1" fill="#d21f2b"/><path d="M8 8V6q2-3 4 0v2" fill="none" stroke="#d21f2b" stroke-width="1.500"/><path d="M8 10h4v3H8z" fill="#fff"/></svg>
    <svg width="16" height="16"><path d="M8 0l6 3v7q-1 4-6 6-5-2-6-6V3z" fill="#d21f2b" stroke="#8a1018"/><path d="M8 4v5M8 11v2" stroke="#fff" stroke-width="2"/></svg>
    <svg width="16" height="16"><rect width="16" height="16" rx="6" fill="#9bbdb9"/><path d="M11 5q-3-2-5 0t2 3 2 3-5 0" fill="none" stroke="#fff" stroke-width="2"/></svg>
    <svg width="16" height="16"><circle cx="8" cy="8" r="7" fill="#e9f1f4" stroke="#456"/><path d="M2 6q5-5 9 0l3 3-6 2V8Q5 5 2 6" fill="#2b63a8"/><path d="M6 12q4 4 8-2l-3 1-3-1z" fill="#4a9c3c"/></svg>
    <svg width="16" height="16"><path d="M3 3h10v9H3z" fill="#9ed0f4" stroke="#fff"/><path d="M5 5h3v3H5z" fill="#e8632b"/><path d="M9 5h3v3H9z" fill="#5fae3a"/><path d="M1 14q8 3 13-4M12 1q4 3 2 8" stroke="#f0a32c" stroke-width="2" fill="none"/></svg>
    <svg width="16" height="16" stroke="#fff" stroke-width="2"><path d="M2 13v-2M5 13V9M8 13V7M11 13V5M14 13V2"/></svg>
    <svg width="16" height="16"><path d="M8 0l6 2v7q-2 5-6 7-4-2-6-7V2z" fill="#3f7fd0" stroke="#cfe0f2"/><circle cx="8" cy="7" r="3" fill="none" stroke="#e5eef8" stroke-width="2"/></svg>
    <svg width="16" height="16"><path d="M2 1v14M4 2h8v7H4z" fill="#fff" stroke="#fff" stroke-width="2"/><circle cx="11" cy="11" r="5" fill="#d21f2b"/><path d="M9 9l4 4M13 9l-4 4" stroke="#fff" stroke-width="1.500"/></svg>
    <svg width="16" height="16" fill="none" stroke="#fff" stroke-width="2"><path d="M3 3h5M2 4v10h6V9M8 5h6v4q-3 3-5 0zM10 2v3M13 2v3M11 10v4"/></svg>
    <svg width="16" height="16"><path d="M1 5h3l4-4v14l-4-4H1z" fill="#fff" stroke="#234"/><path d="M10 5q2 3 0 6M12 3q4 5 0 10" fill="none" stroke="#fff" stroke-width="1.500"/></svg>
  </div>
  <span class="ms-4 me-4">16:00</span>
  <button class="peek" aria-label="Show desktop"></button>
</div>

<script>
  // Stencils, each drawn around the centre of its 39 x 36 cell
  const stencils = {
    uml: [
      '<path d="M-12-9h24v18h-24z"/>', '<path d="M-4-12h8v24h-8z"/>', '<path class="n" d="M-5-5 5 5M5-5-5 5"/>',
      '<path d="M-12-9H5l7 7V9h-24zM5-9v7h7"/>', '<path d="M-12 8V-8H3v3h9V8zM-12-5H3"/>',
      '<path class="n" d="M-3-12q-5 0-5 5 0 7-4 7 4 0 4 7 0 5 5 5M3-12q5 0 5 5 0 7 4 7-4 0-4 7 0 5-5 5"/>',
      '<path class="n" d="M-12-9h24V9h-24zM-12-5H0l3-4"/>', '<path class="n" d="M-12-9h24V9h-24zM-12-5H0l3-4"/><path class="n" d="M-11 0h22" stroke-dasharray="2 1"/>',
      '<ellipse cx="-1" cy="-1" rx="10" ry="11"/><path d="M-11 11H9"/>', '<circle cx="1" r="11"/><path d="M-12-11v22"/>',
      '<ellipse rx="10" ry="11"/><path class="n" d="m1-13-2 2 2 1"/>'
    ],
    flow: [
      '<path d="M-12-9h24V9h-24z"/>', '<path d="M-12 0 0-9 12 0 0 9z"/>', '<path d="M-6-6H6q6 0 6 6T6 6H-6q-6 0-6-6t6-6z"/>',
      '<path class="g" d="M-12-9h24V9h-24z"/><path d="M-8-9H8V9H-8z"/>', '<path d="M-12-9h24V9Q6 4 0 7t-12 1z"/>',
      '<path class="k" d="M-12-9h22l2 3-20 14-4-4z"/><path d="M-8-6h20V9Q6 5 1 7-4 9-8 8z"/>', '<path d="M-12-5 12-9V9h-24z"/>',
      '<path d="M-7-9H7l5 9-5 9H-7l-5-9z"/>', '<path d="M-7-9h19L7 9h-19z"/>', '<path d="M-12-9V9q0 3 12 3T12 9V-9"/><ellipse cy="-9" rx="12" ry="3"/>',
      '<path d="M-9-9H9q3 0 3 9T9 9H-9q-3 0-3-9t3-9M9-9Q6-5 7 0q0 7 2 9"/>', '<path class="g" d="M-12-9h24V9h-24z"/><path d="M-9-6h21V9H-9z"/>',
      '<path d="M-12-9q6 4 12 1 7-3 12 1V9Q6 4 0 7q-6 2-12 0z"/>', '<path d="M-12-9h24L8 9H-8z"/>', '<path d="M-12-12H0A12 12 0 0 1 0 12h-12z"/>',
      '<path d="M-8-9h20q-3 9 0 18H-9q-3 0-3-9t4-9z"/>', '<path d="M-12-9h24L0 9z"/>', '<circle r="12"/>',
      '<circle r="12"/><path d="M0-12v24M-12 0h24"/>', '<circle r="12"/><path d="M-8-8 8 8M8-8-8 8"/>',
      '<path d="M-8 4V-6q0-3 3-3H8q3 0 3 3V4"/>', '<path d="M-12 4v-15h24V4"/>', '<path class="n" d="M-6-12q4 0 4 5V4"/>',
      '<path class="n" d="M12-12q-4 0-4 5V4"/>', '<path class="n" d="M-9-10h-3V4"/>'
    ]
  };
  document.querySelectorAll('[data-set]').forEach(box => {
    box.innerHTML = stencils[box.dataset.set].map(s => `<button aria-label="Shape"><svg width="39" height="36" viewBox="-20 -18 39 36">${s}</svg></button>`).join('');
  });
  // Sheet grid: every fourth line is heavier
  let minor = '', major = '';
  for (let i = 0; i < 88; i++) { const x = Math.round(336 + i * 10.1) + .5, l = `M${x} 201V706`; i % 4 ? minor += l : major += l; }
  for (let i = -2; i < 48; i++) { const y = Math.round(224 + i * 10.1) + .5, l = `M336 ${y}H1223`; i % 4 ? minor += l : major += l; }
  document.getElementById('minor').setAttribute('d', minor);
  document.getElementById('major').setAttribute('d', major);
</script>
<script src="https://cdn.jsdelivr.net/npm/bootstrap@5.3.0/dist/js/bootstrap.bundle.min.js"></script>
</body>
</html>
